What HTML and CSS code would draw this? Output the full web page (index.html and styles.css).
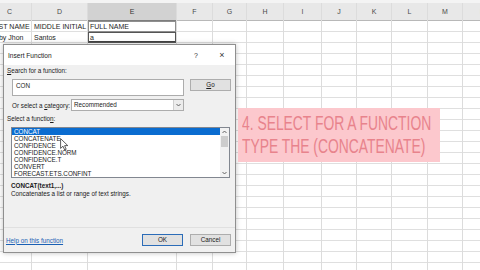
FILE: index.html
```html
<!DOCTYPE html>
<html>

<head>
    <meta charset="utf-8" />
    <title>Insert Function</title>
    <link rel="stylesheet" href="styles.css">
</head>

<body>
    <div class="screen">
        <div class="strip"></div>
        <!-- worksheet columns -->
        <div class="sheet">
            <div class="col w44">
                <div class="hd">C</div>
                <div class="body">
                    <div class="cell">LAST NAME</div>
                    <div class="cell">Ruby Jhon</div>
                </div>
            </div>
            <div class="col w56">
                <div class="hd">D</div>
                <div class="body">
                    <div class="cell">MIDDLE INITIAL</div>
                    <div class="cell">Santos</div>
                    <div class="cell">Emilia</div>
                </div>
            </div>
            <div class="col w89">
                <div class="hd sel">E</div>
                <div class="body">
                    <div class="cell act">FULL NAME</div>
                    <div class="cell act cur">a</div>
                </div>
            </div>
            <div class="col w36"><div class="hd">F</div><div class="body"></div></div>
            <div class="col w34"><div class="hd">G</div><div class="body"></div></div>
            <div class="col w37"><div class="hd">H</div><div class="body"></div></div>
            <div class="col w38"><div class="hd">I</div><div class="body"></div></div>
            <div class="col w35"><div class="hd">J</div><div class="body"></div></div>
            <div class="col w35"><div class="hd">K</div><div class="body"></div></div>
            <div class="col w36"><div class="hd">L</div><div class="body"></div></div>
            <div class="col w35"><div class="hd">M</div><div class="body"></div></div>
            <div class="col w40"><div class="hd">N</div><div class="body"></div></div>
        </div>

        <!-- Insert Function dialog -->
        <div class="dialog">
            <div class="titlebar">
                <span class="title">Insert Function</span>
                <span class="tb-btn">?</span>
                <span class="tb-btn x">×</span>
            </div>
            <div class="dlg-body">
                <div class="lbl"><u>S</u>earch for a function:</div>
                <div class="search-row">
                    <div class="search">CON</div>
                    <div class="btn"><u>G</u>o</div>
                </div>
                <div class="cat-row">
                    <span class="cat-lbl">Or select a <u>c</u>ategory:</span>
                    <div class="select">
                        <span class="sel-text">Recommended</span>
                        <span class="sel-arrow">
                            <svg width="5" height="4" viewBox="0 0 5 4"><path d="M0.5 1 L2.5 3 L4.5 1" fill="none" stroke="#555" stroke-width="0.9"/></svg>
                        </span>
                    </div>
                </div>
                <div class="lbl lbl2">Select a functio<u>n</u>:</div>
                <div class="list">
                    <div class="items">
                        <div class="item on">CONCAT</div>
                        <div class="item">CONCATENATE</div>
                        <div class="item">CONFIDENCE</div>
                        <div class="item">CONFIDENCE.NORM</div>
                        <div class="item">CONFIDENCE.T</div>
                        <div class="item">CONVERT</div>
                        <div class="item">FORECAST.ETS.CONFINT</div>
                    </div>
                    <div class="scroll">
                        <svg class="arr" width="9" height="8" viewBox="0 0 9 8"><path d="M2.5 5 L4.5 3 L6.5 5" fill="none" stroke="#555" stroke-width="0.9"/></svg>
                        <div class="thumb"></div>
                        <div class="track"></div>
                        <svg class="arr" width="9" height="8" viewBox="0 0 9 8"><path d="M2.5 3 L4.5 5 L6.5 3" fill="none" stroke="#555" stroke-width="0.9"/></svg>
                    </div>
                </div>
                <div class="sig">CONCAT(text1,...)</div>
                <div class="desc">Concatenates a list or range of text strings.</div>
            </div>
            <div class="footer">
                <a class="help">Help on this function</a>
                <div class="btn ok">OK</div>
                <div class="btn">Cancel</div>
            </div>
        </div>

        <!-- mouse pointer over the list -->
        <svg class="cursor" width="9" height="13" viewBox="0 0 9 13">
            <path d="M0.6 0.6 L0.6 10.4 L3 8.2 L4.7 12 L6.2 11.3 L4.6 7.6 L7.8 7.6 Z" fill="#fff" stroke="#333" stroke-width="0.8"/>
        </svg>

        <!-- tutorial caption -->
        <div class="callout">
            <div class="callout-text">4. SELECT FOR A FUNCTION<br>TYPE THE (CONCATENATE)</div>
        </div>
    </div>
</body>

</html>
```

FILE: styles.css
```css
body {
    margin: 0;
    background: #fff;
    font-family: "Liberation Sans", Arial, sans-serif;
}

.screen {
    position: relative;
    width: 480px;
    height: 270px;
    overflow: hidden;
    background: #fff;
}

.strip {
    height: 3px;
    background: #f4f4f4;
}

/* worksheet */
.sheet {
    display: flex;
    margin-left: -12px;
    height: 267px;
}

.sheet .col {
    flex: none;
    box-sizing: border-box;
    display: flex;
    flex-direction: column;
    border-right: 1px solid #dcdcdc;
}

.w34 { width: 34px; }
.w35 { width: 35px; }
.w36 { width: 36px; }
.w37 { width: 37px; }
.w38 { width: 38px; }
.w40 { width: 40px; }
.w44 { width: 44px; }
.w56 { width: 56px; }
.w89 { width: 89px; }

.sheet .hd {
    height: 17px;
    line-height: 17px;
    background: #e8e8e8;
    border-bottom: 1px solid #b8b8b8;
    text-align: center;
    font-size: 7px;
    color: #4a4a4a;
}

.sheet .hd.sel {
    background: #d2d2d2;
    border-bottom-color: #7d7d7d;
    color: #333;
}

.sheet .body {
    flex: 1;
    background: repeating-linear-gradient(to bottom, transparent 0, transparent 10px, #dfdfdf 10px, #dfdfdf 11px);
}

.sheet .cell {
    height: 11px;
    line-height: 11px;
    padding-left: 2px;
    font-size: 7px;
    color: #1e1e1e;
    white-space: nowrap;
    overflow: hidden;
}

.sheet .cell.act {
    box-shadow: inset 0 0 0 1px #8e8e8e;
}

.sheet .cell.cur {
    box-shadow: inset 0 0 0 1px #555, inset 0 -2px 0 #444;
}

/* dialog */
.dialog {
    position: absolute;
    left: 3px;
    top: 44px;
    width: 233px;
    height: 209px;
    box-sizing: border-box;
    display: flex;
    flex-direction: column;
    border: 1px solid #8f8f8f;
    background: #f0f0f0;
    box-shadow: 0 0 5px rgba(0, 0, 0, 0.25);
    font-size: 6.3px;
    color: #1a1a1a;
}

.titlebar {
    display: flex;
    align-items: center;
    height: 20px;
    padding: 0 3px 0 4px;
    background: #fff;
    font-size: 6.6px;
}

.titlebar .title {
    flex: 1;
}

.titlebar .tb-btn {
    width: 20px;
    text-align: center;
    font-size: 7px;
    color: #333;
}

.titlebar .tb-btn.x {
    margin-left: 6px;
    font-size: 9px;
}

.dlg-body {
    flex: 1;
    display: flex;
    flex-direction: column;
    padding: 0 4px 0 3px;
}

.lbl {
    margin-top: 2px;
    line-height: 8px;
}

.lbl2 {
    margin-top: 4px;
}

.search-row {
    display: flex;
    align-items: flex-start;
    gap: 6px;
    margin: 4px 0 0 5px;
}

.search {
    width: 172px;
    height: 17px;
    box-sizing: border-box;
    padding: 2px 3px;
    line-height: 8px;
    background: #fff;
    border: 1px solid #acacac;
}

.btn {
    width: 41px;
    height: 12px;
    box-sizing: border-box;
    line-height: 10px;
    text-align: center;
    background: #e1e1e1;
    border: 1px solid #adadad;
}

.cat-row {
    display: flex;
    align-items: center;
    height: 12px;
    margin: 3px 0 0 5px;
}

.cat-lbl {
    width: 59px;
    white-space: nowrap;
}

.select {
    display: flex;
    width: 113px;
    height: 12px;
    box-sizing: border-box;
    background: #fff;
    border: 1px solid #acacac;
}

.sel-text {
    flex: 1;
    padding-left: 2px;
    line-height: 10px;
}

.sel-arrow {
    display: flex;
    align-items: center;
    justify-content: center;
    width: 9px;
    background: #ececec;
    border-left: 1px solid #cfcfcf;
}

.list {
    display: flex;
    width: 219px;
    height: 51px;
    box-sizing: border-box;
    margin: 4px 0 0 4px;
    background: #fff;
    border: 1px solid #828790;
}

.items {
    flex: 1;
    overflow: hidden;
}

.item {
    height: 7px;
    line-height: 7px;
    padding-left: 2px;
    white-space: nowrap;
}

.item.on {
    background: #0a6cd0;
    color: #fff;
}

.scroll {
    display: flex;
    flex-direction: column;
    width: 9px;
    background: #f2f2f2;
}

.scroll .arr {
    display: block;
    flex: none;
}

.scroll .thumb {
    height: 11px;
    margin: 0 1px;
    background: #cdcdcd;
}

.scroll .track {
    flex: 1;
}

.sig {
    margin: 4px 0 0 4px;
    line-height: 8px;
    font-weight: 700;
}

.desc {
    margin-left: 4px;
    line-height: 8px;
}

.footer {
    display: flex;
    align-items: center;
    gap: 7px;
    height: 25px;
    box-sizing: border-box;
    padding: 0 4px 0 2px;
    border-top: 1px solid #e0e0e0;
}

.footer .help {
    flex: 1;
    color: #1a5fb4;
    text-decoration: underline;
}

.footer .ok {
    border-color: #2b6cb8;
}

.cursor {
    position: absolute;
    left: 60px;
    top: 138px;
}

/* caption */
.callout {
    position: absolute;
    left: 238px;
    top: 108px;
    width: 202px;
    height: 54px;
    box-sizing: border-box;
    padding: 3px 0 0 4px;
    background: #fcc8cd;
    overflow: hidden;
}

.callout-text {
    width: 320px;
    font-size: 21px;
    line-height: 23px;
    color: #e8838c;
    white-space: nowrap;
    transform: scaleX(0.66);
    transform-origin: left top;
}
```
